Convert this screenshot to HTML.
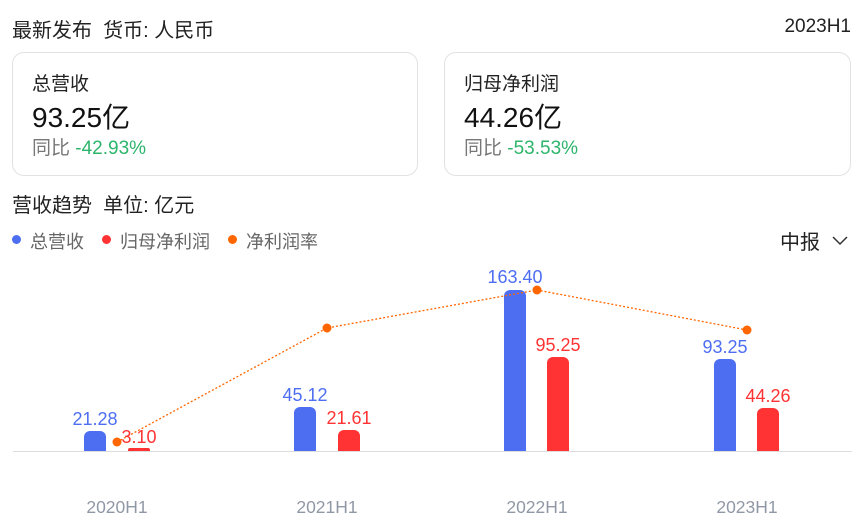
<!DOCTYPE html>
<html><head><meta charset="utf-8"><style>
body{margin:0;width:863px;height:525px;background:#fff;font-family:"Liberation Sans","Noto Sans CJK SC",sans-serif;position:relative;overflow:hidden;color:#222}
.a{position:absolute;white-space:nowrap}
.card{position:absolute;top:52px;width:406px;height:124px;border:1px solid #e2e2e2;border-radius:12px;box-sizing:border-box}
.d{position:absolute;top:235px;width:9px;height:9px;border-radius:50%}
</style></head><body>
<div class="a" style="left:12px;top:14px;font-size:20px;color:#222">最新发布&nbsp;&nbsp;货币: 人民币</div>
<div class="a" style="right:12px;top:16px;font-size:19px;color:#222">2023H1</div>
<div class="card" style="left:12px">
 <div class="a" style="left:19px;top:16px;font-size:19px">总营收</div>
 <div class="a" style="left:19px;top:43px;font-size:28px;color:#111">93.25亿</div>
 <div class="a" style="left:19px;top:80px;font-size:19px;color:#777">同比 <span style="color:#2db56b">-42.93%</span></div>
</div>
<div class="card" style="left:444px;width:407px">
 <div class="a" style="left:19px;top:16px;font-size:19px">归母净利润</div>
 <div class="a" style="left:19px;top:43px;font-size:28px;color:#111">44.26亿</div>
 <div class="a" style="left:19px;top:80px;font-size:19px;color:#777">同比 <span style="color:#2db56b">-53.53%</span></div>
</div>
<div class="a" style="left:12px;top:189px;font-size:20px">营收趋势&nbsp;&nbsp;单位: 亿元</div>
<div class="d" style="left:12px;background:#4e6ef2"></div>
<div class="d" style="left:102px;background:#f33"></div>
<div class="d" style="left:228px;background:#f60"></div>
<div class="a" style="left:30px;top:228px;font-size:18px;color:#666">总营收</div>
<div class="a" style="left:120px;top:228px;font-size:18px;color:#666">归母净利润</div>
<div class="a" style="left:246px;top:228px;font-size:18px;color:#666">净利润率</div>
<div class="a" style="left:780px;top:226px;font-size:20px">中报</div>
<svg class="a" style="left:0;top:0" width="863" height="525">
<polyline points="833,237 840,244 847,237" fill="none" stroke="#333" stroke-width="1.5"/>
<line x1="13" y1="451.5" x2="852" y2="451.5" stroke="#ddd" stroke-width="1"/>
<g fill="#4e6ef2">
<path d="M84 451V437a6 6 0 0 1 6-6h10a6 6 0 0 1 6 6V451z"/>
<path d="M294 451V413a6 6 0 0 1 6-6h10a6 6 0 0 1 6 6V451z"/>
<path d="M504 451V296a6 6 0 0 1 6-6h10a6 6 0 0 1 6 6V451z"/>
<path d="M714 451V365a6 6 0 0 1 6-6h10a6 6 0 0 1 6 6V451z"/>
</g>
<g fill="#ff3333">
<path d="M128 451V450a2 2 0 0 1 2-2h18a2 2 0 0 1 2 2V451z"/>
<path d="M338 451V436a6 6 0 0 1 6-6h10a6 6 0 0 1 6 6V451z"/>
<path d="M547 451V363a6 6 0 0 1 6-6h10a6 6 0 0 1 6 6V451z"/>
<path d="M757 451V414a6 6 0 0 1 6-6h10a6 6 0 0 1 6 6V451z"/>
</g>
<polyline points="117,442 327,328 537,290 747,330" fill="none" stroke="#f60" stroke-width="1.3" stroke-dasharray="2,2"/>
<g fill="#f60"><circle cx="117" cy="442" r="4.5"/><circle cx="327" cy="328" r="4.5"/><circle cx="537" cy="290" r="4.5"/><circle cx="747" cy="330" r="4.5"/></g>
<g font-size="18" text-anchor="middle" font-family="Liberation Sans,sans-serif">
<text x="95" y="425" fill="#4e6ef2">21.28</text>
<text x="139" y="443" fill="#ff3333">3.10</text>
<text x="305" y="401" fill="#4e6ef2">45.12</text>
<text x="349" y="424" fill="#ff3333">21.61</text>
<text x="515" y="283" fill="#4e6ef2">163.40</text>
<text x="558" y="351" fill="#ff3333">95.25</text>
<text x="725" y="353" fill="#4e6ef2">93.25</text>
<text x="768" y="402" fill="#ff3333">44.26</text>
</g>
<g font-size="17.5" text-anchor="middle" fill="#9098a6" font-family="Liberation Sans,sans-serif">
<text x="117" y="513">2020H1</text><text x="327" y="513">2021H1</text><text x="537" y="513">2022H1</text><text x="747" y="513">2023H1</text>
</g>
</svg>
</body></html>
